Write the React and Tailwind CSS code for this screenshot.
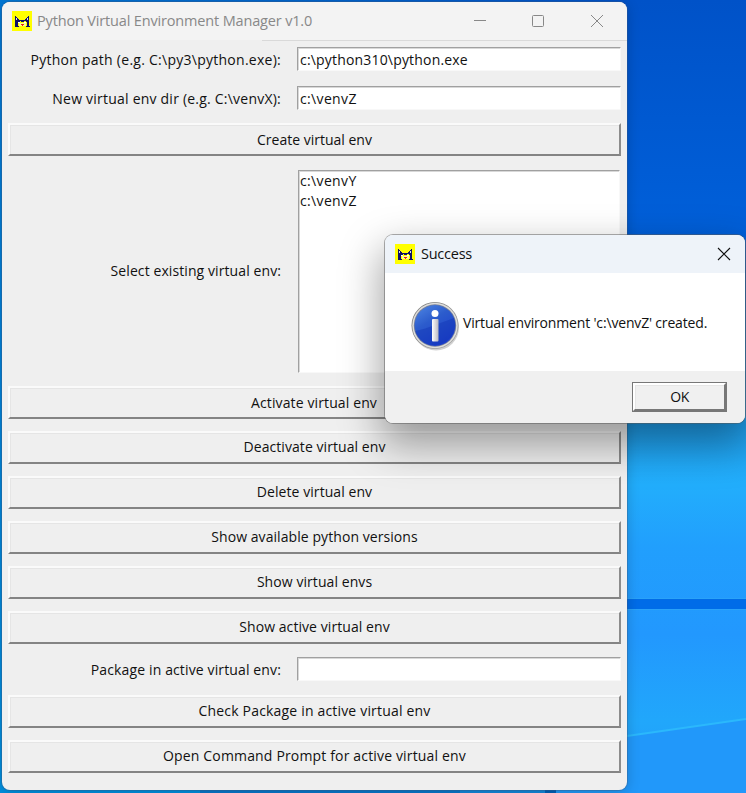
import React from 'react';

const FONT = "font-['Open_Sans','Noto_Sans',sans-serif]";

function AppIcon() {
  return (
    <svg width="20" height="20" viewBox="0 0 20 20" shapeRendering="crispEdges" className="shrink-0">
      <rect width="20" height="20" fill="#ffff00" />
      <path d="M3 5h1v1h1v1h1v1h1v1h6V8h1V7h1V6h1V5h1v10h1v1h-4v-1h1v-4h-1v-1h-2v1h-3v-1H8v1H7v1H6v3h1v1H3z" fill="#101068" />
      <path d="M4 7h1v2H4zM15 7h1v2h-1z" fill="#d8dcf0" />
      <path d="M6 11h2v1H6zM12 11h2v1h-2z" fill="#ffffff" />
      <path d="M7 12h7v3H7z" fill="#ffff90" />
      <path d="M9 13h3v1h-1v1h-1v-1H9z" fill="#e82020" />
    </svg>
  );
}

function Text({ className = '', children }) {
  return <span className={`whitespace-pre text-[14px] leading-5 text-[#111] ${className}`}>{children}</span>;
}

function Button({ className = '', children, spacing = 'tracking-[0.07px]', inset = 'pb-0.5' }) {
  return (
    <button className={`flex h-[33px] w-full shrink-0 items-center justify-center border-2 border-t-[#fafafa] border-l-[#fafafa] border-r-[#8c8c8c] border-b-[#848484] bg-[#efefef] shadow-[inset_1px_1px_0_#e5e5e5] ${inset} ${className}`}>
      <Text className={spacing}>{children}</Text>
    </button>
  );
}

function Field({ label, value = '', className = '', spacing = '', valueSpacing = '' }) {
  return (
    <div className={`flex h-6 shrink-0 items-center ${className}`}>
      <label className="w-[273px] shrink-0 text-right"><Text className={spacing}>{label}</Text></label>
      <div className="ml-[16px] flex h-6 flex-1 items-center border border-t-[#a0a0a0] border-r-[#f8f8f8] border-b-[#f8f8f8] border-l-[#a0a0a0] bg-white pt-0.5 pl-[2px] shadow-[inset_1px_1px_0_#d8d8d8]">
        <Text className={valueSpacing}>{value}</Text>
      </div>
    </div>
  );
}

function Wallpaper() {
  return (
    <svg className="absolute inset-0" width="746" height="793" viewBox="0 0 746 793">
      <defs>
        <linearGradient id="sky" x1="0" y1="0" x2="0" y2="1">
          <stop offset="0" stopColor="#0052c8" />
          <stop offset="0.3" stopColor="#0060da" />
          <stop offset="0.52" stopColor="#1f9eec" />
          <stop offset="0.61" stopColor="#22aefc" />
          <stop offset="0.69" stopColor="#219ffd" />
          <stop offset="0.8" stopColor="#2298fe" />
          <stop offset="0.91" stopColor="#21a7fb" />
          <stop offset="1" stopColor="#2299f8" />
        </linearGradient>
        <linearGradient id="edge" x1="0" y1="0" x2="0" y2="1">
          <stop offset="0" stopColor="#0078d6" />
          <stop offset="1" stopColor="#0090e0" />
        </linearGradient>
        <linearGradient id="top">
          <stop offset="0" stopColor="#0078d6" />
          <stop offset="1" stopColor="#0052c8" />
        </linearGradient>
      </defs>
      <rect width="746" height="793" fill="url(#sky)" />
      <rect width="300" height="793" fill="url(#edge)" />
      <rect width="620" height="15" fill="url(#top)" />
      <rect y="780" x="200" width="260" height="13" fill="#0878cc" />
      <rect y="780" x="460" width="85" height="13" fill="#1488dc" />
      <rect y="780" x="545" width="11" height="13" fill="#0060b8" />
      <rect x="600" y="598" width="146" height="12" fill="#2aa2f8" />
      <rect x="600" y="599" width="146" height="10" fill="#006ce8" />
      <path d="M620 737L746 719V793H620z" fill="#2198fa" />
      <path d="M620 737L746 719" stroke="#2bb8fc" strokeWidth="2" />
    </svg>
  );
}

function InfoIcon() {
  return (
    <svg width="50" height="52" viewBox="0 0 50 52" className="mt-2 shrink-0">
      <defs>
        <linearGradient id="ring" x1="0" y1="0" x2="1" y2="1">
          <stop offset="0" stopColor="#777" />
          <stop offset="1" stopColor="#aaa" />
        </linearGradient>
        <linearGradient id="blue" x1="0" y1="0" x2="0.6" y2="1">
          <stop offset="0" stopColor="#5088e4" />
          <stop offset="0.45" stopColor="#2c5ccc" />
          <stop offset="1" stopColor="#1c3fcc" />
        </linearGradient>
        <linearGradient id="stem">
          <stop offset="0" stopColor="#fff" />
          <stop offset="1" stopColor="#b8b8c0" />
        </linearGradient>
      </defs>
      <ellipse cx="26" cy="27.5" rx="23" ry="23" fill="#000" opacity=".18" />
      <circle cx="25" cy="25.5" r="23.5" fill="url(#ring)" />
      <circle cx="25" cy="25.5" r="22.7" fill="#dededb" />
      <circle cx="25" cy="25.5" r="21.2" fill="#777f98" />
      <circle cx="25" cy="25.5" r="20.4" fill="url(#blue)" />
      <path d="M5 31C17 29 32 22 44 18A20.4 20.4 0 0 1 5 31" fill="#1236b4" opacity=".45" />
      <circle cx="25" cy="13.5" r="3.5" fill="#fff" />
      <rect x="22" y="19" width="6.5" height="22.5" rx="1" fill="url(#stem)" />
    </svg>
  );
}

export default function App() {
  return (
    <div className={`relative h-[793px] w-[746px] overflow-hidden ${FONT}`}>
      <Wallpaper />
      <main className="absolute top-[2px] left-[2px] flex h-[788px] w-[625px] flex-col overflow-hidden rounded-lg bg-[#efefef] shadow-[0_0_0_1px_rgba(60,90,130,0.35),0_2px_14px_rgba(0,0,0,0.2)]">
        <header className="flex h-[38px] shrink-0 items-center bg-[#f3f3f3] pl-[10px]">
          <AppIcon />
          <span className="ml-[5px] text-[14.5px] tracking-[-0.16px] whitespace-pre text-[#888]">Python Virtual Environment Manager v1.0</span>
          <svg className="ml-auto" width="154" height="38" viewBox="0 0 154 38" fill="none" stroke="#888" strokeWidth="1">
            <path d="M1 18.5h12M118 13l12 12M130 13l-12 12" />
            <rect x="59.5" y="13.5" width="11" height="11" rx="1" />
          </svg>
        </header>
        <div className="ml-[260px] h-px shrink-0 bg-[#d9d9d9]" />
        <div className="flex flex-1 flex-col px-[6px] pt-[6px]">
          <Field spacing="tracking-[0.26px]" valueSpacing="tracking-[0.18px]" label="Python path (e.g. C:\py3\python.exe):" value="c:\python310\python.exe" />
          <Field spacing="tracking-[0.22px]" valueSpacing="tracking-[0.35px]" className="mt-[15px]" label="New virtual env dir (e.g. C:\venvX):" value="c:\venvZ" />
          <Button className="mt-[13px]" spacing="tracking-normal" inset="pb-0">Create virtual env</Button>
          <div className="mt-[14px] flex h-[203px] shrink-0 items-center">
            <div className="w-[273px] pb-[3px] text-right"><Text className="tracking-[0.09px]">Select existing virtual env:</Text></div>
            <div className="mr-[1px] ml-[17px] flex h-full flex-1 flex-col border border-t-[#a0a0a0] border-r-[#f8f8f8] border-b-[#f8f8f8] border-l-[#a0a0a0] bg-white pl-px shadow-[inset_1px_1px_0_#d8d8d8]">
              <Text className="tracking-[0.35px]">c:\venvY</Text>
              <Text className="tracking-[0.35px]">c:\venvZ</Text>
            </div>
          </div>
          <div className="mt-[13px] flex flex-col gap-3">
            <Button spacing="tracking-[0.12px]" inset="pr-px pb-0">Activate virtual env</Button>
            <Button>Deactivate virtual env</Button>
            <Button>Delete virtual env</Button>
            <Button>Show available python versions</Button>
            <Button>Show virtual envs</Button>
            <Button>Show active virtual env</Button>
          </div>
          <Field spacing="tracking-[0.13px]" className="mt-[13px]" label="Package in active virtual env:" />
          <div className="mt-[14px] flex flex-col gap-3">
            <Button spacing="tracking-[0.18px]">Check Package in active virtual env</Button>
            <Button spacing="tracking-[0.16px]">Open Command Prompt for active virtual env</Button>
          </div>
        </div>
      </main>
      <section className="absolute top-[235px] left-[385px] flex h-[188px] w-[360px] flex-col overflow-hidden rounded-lg bg-white shadow-[0_0_0_1px_rgba(90,90,90,0.5),0_18px_40px_4px_rgba(0,0,0,0.36)]">
        <header className="flex h-[38px] shrink-0 items-center bg-[#eef3f9] pl-[10px]">
          <AppIcon />
          <span className="ml-[6px] text-[14.5px] tracking-[-0.25px] whitespace-pre text-[#111]">Success</span>
          <svg className="mr-[14px] ml-auto" width="14" height="14" viewBox="0 0 14 14" stroke="#111" strokeWidth="1.1"><path d="M1 1l12 12M13 1L1 13" /></svg>
        </header>
        <div className="flex h-[98px] shrink-0 items-center pl-[25px]">
          <InfoIcon />
          <Text className="mt-[2px] ml-[3px] tracking-[-0.17px]">Virtual environment 'c:\venvZ' created.</Text>
        </div>
        <footer className="flex flex-1 justify-end bg-[#f0f0f0] pt-[11px] pr-[18px]">
          <div className="h-[30px] w-[95px] border border-[#777]">
            <button className="flex h-full w-full items-center justify-center border-2 border-t-white border-r-[#777] border-b-[#777] border-l-white pb-px shadow-[inset_1px_1px_0_#e5e5e5]"><Text className="tracking-[-0.5px]">OK</Text></button>
          </div>
        </footer>
      </section>
    </div>
  );
}
